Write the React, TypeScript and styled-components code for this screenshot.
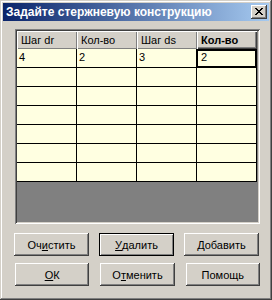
import React from 'react';
import styled, { createGlobalStyle } from 'styled-components';

const GlobalStyle = createGlobalStyle`
  html, body { margin: 0; padding: 0; background: #D4D0C8; }
  * { box-sizing: border-box; }
`;

const Window = styled.div`
  width: 272px;
  height: 300px;
  background: #d4d0c8;
  padding: 3px;
  display: flex;
  flex-direction: column;
  box-shadow: inset -1px -1px 0 #404040, inset 1px 1px 0 #d4d0c8,
    inset -2px -2px 0 #808080, inset 2px 2px 0 #ffffff;
  font-family: "Liberation Sans", Arial, sans-serif;
  font-size: 11px;
  color: #000;
`;

const TitleBar = styled.div`
  height: 18px;
  flex: none;
  background: linear-gradient(to right, #0a246a, #a6caf0);
  display: flex;
  align-items: center;
  justify-content: space-between;
  padding: 0 2px 0 3px;
`;

const TitleText = styled.span`
  font-family: "Liberation Sans", Arial, sans-serif;
  font-weight: bold;
  font-size: 12px;
  color: #fff;
  white-space: nowrap;
`;

const CaptionButton = styled.div`
  width: 16px;
  height: 14px;
  background: #d4d0c8;
  box-shadow: inset -1px -1px 0 #404040, inset 1px 1px 0 #ffffff,
    inset -2px -2px 0 #808080;
  display: flex;
  align-items: center;
  justify-content: center;
  padding-bottom: 1px;
`;

const Client = styled.div`
  flex: 1;
  margin-top: 1px;
  padding: 7px 9px 0 11px;
  display: flex;
  flex-direction: column;
`;

const GridFrame = styled.div`
  width: 245px;
  height: 195px;
  margin-left: 1px;
  padding: 2px;
  background: #808080;
  box-shadow: inset 1px 1px 0 #808080, inset -1px -1px 0 #ffffff,
    inset 2px 2px 0 #404040, inset -2px -2px 0 #d4d0c8;
`;

const Row = styled.div`
  display: flex;
`;

const HeaderCell = styled.div<{ $active?: boolean }>`
  width: 60px;
  height: 18px;
  line-height: 18px;
  padding-left: 4px;
  background: #d4d0c8;
  white-space: nowrap;
  font-weight: ${(p) => (p.$active ? 'bold' : 'normal')};
  box-shadow: ${(p) =>
    p.$active
      ? 'inset 1px 1px 0 #ffffff, inset -1px -1px 0 #404040, inset -2px -2px 0 #808080'
      : 'inset 1px 1px 0 #ffffff, inset -1px -1px 0 #808080'};
`;

const DataCell = styled.div<{ $current?: boolean }>`
  width: 60px;
  height: 19px;
  line-height: 17px;
  padding-left: ${(p) => (p.$current ? '4px' : '2px')};
  background: #ffffe1;
  border-right: 1px solid #000;
  border-bottom: 1px solid #000;
  box-shadow: ${(p) =>
    p.$current ? 'inset 0 2px 0 #000, inset 1px 0 0 #000, inset -1px -1px 0 #000' : 'none'};
`;

const ButtonRow = styled.div<{ $top: number; $left: number; $gap: number }>`
  display: flex;
  margin-top: ${(p) => p.$top}px;
  padding-left: ${(p) => p.$left}px;
  gap: ${(p) => p.$gap}px;
`;

const Button = styled.button<{ $default?: boolean }>`
  width: 75px;
  height: 23px;
  padding: 0;
  border: none;
  background: #d4d0c8;
  font-family: "Liberation Sans", Arial, sans-serif;
  font-size: 11px;
  color: #000;
  display: flex;
  align-items: center;
  justify-content: center;
  box-shadow: ${(p) =>
    p.$default
      ? 'inset 0 0 0 1px #000000, inset 2px 2px 0 #ffffff, inset -2px -2px 0 #808080'
      : 'inset -1px -1px 0 #404040, inset 1px 1px 0 #ffffff, inset -2px -2px 0 #808080'};
`;

const Accel = styled.span`
  text-decoration: underline;
  text-underline-offset: 1px;
`;

const CloseGlyph = () => (
  <svg width="8" height="7" viewBox="0 0 8 7" shapeRendering="crispEdges">
    <g fill="#000">
      <rect x="0" y="0" width="2" height="1" />
      <rect x="6" y="0" width="2" height="1" />
      <rect x="1" y="1" width="2" height="1" />
      <rect x="5" y="1" width="2" height="1" />
      <rect x="2" y="2" width="4" height="1" />
      <rect x="3" y="3" width="2" height="1" />
      <rect x="2" y="4" width="4" height="1" />
      <rect x="1" y="5" width="2" height="1" />
      <rect x="5" y="5" width="2" height="1" />
      <rect x="0" y="6" width="2" height="1" />
      <rect x="6" y="6" width="2" height="1" />
    </g>
  </svg>
);

const headers = ['Шаг dr', 'Кол-во', 'Шаг ds', 'Кол-во'];
const rows: string[][] = [
  ['4', '2', '3', '2'],
  ['', '', '', ''],
  ['', '', '', ''],
  ['', '', '', ''],
  ['', '', '', ''],
  ['', '', '', ''],
  ['', '', '', ''],
];

export default function App() {
  return (
    <>
      <GlobalStyle />
      <Window>
        <TitleBar>
          <TitleText>Задайте стержневую конструкцию</TitleText>
          <CaptionButton>
            <CloseGlyph />
          </CaptionButton>
        </TitleBar>
        <Client>
          <GridFrame>
            <Row>
              {headers.map((h, i) => (
                <HeaderCell key={i} $active={i === 3}>
                  {h}
                </HeaderCell>
              ))}
            </Row>
            {rows.map((r, ri) => (
              <Row key={ri}>
                {r.map((c, ci) => (
                  <DataCell key={ci} $current={ri === 0 && ci === 3}>
                    {c}
                  </DataCell>
                ))}
              </Row>
            ))}
          </GridFrame>
          <ButtonRow $top={9} $left={0} $gap={10}>
            <Button>
              Оч<Accel>и</Accel>стить
            </Button>
            <Button $default>
              <Accel>У</Accel>далить
            </Button>
            <Button>
              <Accel>Д</Accel>обавить
            </Button>
          </ButtonRow>
          <ButtonRow $top={7} $left={1} $gap={11}>
            <Button>
              <Accel>О</Accel>К
            </Button>
            <Button>
              О<Accel>т</Accel>менить
            </Button>
            <Button>Помощь</Button>
          </ButtonRow>
        </Client>
      </Window>
    </>
  );
}
